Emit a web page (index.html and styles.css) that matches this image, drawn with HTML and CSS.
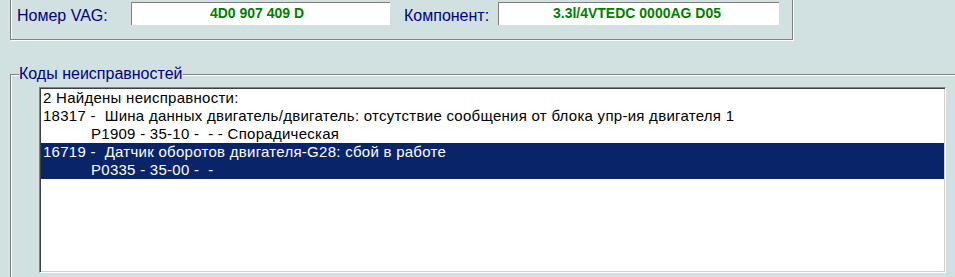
FILE: index.html
```html
<!DOCTYPE html>
<html lang="ru">
<head>
    <meta charset="UTF-8">
    <meta name="viewport" content="width=device-width, initial-scale=1.0">
    <title>Коды неисправностей</title>
    <link rel="stylesheet" href="styles.css">
</head>
<body>
    <div class="ident-panel">
        <div class="ident-row">
            <div class="field-label label-vag">Номер VAG:</div>
            <div class="field-value value-vag">4D0 907 409 D</div>
            <div class="field-label label-comp">Компонент:</div>
            <div class="field-value value-comp">3.3l/4VTEDC 0000AG D05</div>
        </div>
    </div>

    <fieldset class="fault-group">
        <legend class="fault-legend">Коды неисправностей</legend>
        <div class="fault-list">
            <div class="fault-line">2 Найдены неисправности:</div>
            <div class="fault-item">
                <div class="fault-line">18317 -  Шина данных двигатель/двигатель: отсутствие сообщения от блока упр-ия двигателя 1</div>
                <div class="fault-line sub">P1909 - 35-10 -  - - Спорадическая</div>
            </div>
            <div class="fault-item selected">
                <div class="fault-line">16719 -  Датчик оборотов двигателя-G28: сбой в работе</div>
                <div class="fault-line sub">P0335 - 35-00 -  -</div>
            </div>
        </div>
    </fieldset>
</body>
</html>
```

FILE: styles.css
```css
* {
    margin: 0;
    padding: 0;
    box-sizing: border-box;
}

body {
    font-family: "Liberation Sans", Arial, sans-serif;
    background-color: #d1e0e0;
    width: 955px;
    height: 277px;
    overflow: hidden;
}

/* top panel, its upper edge is scrolled out of view */
.ident-panel {
    width: 783px;
    height: 60px;
    margin: -20px 0 0 10px;
    padding: 21px 0 0 6px;
    border: 1px solid #808080;
    box-shadow: inset 1px 1px 0 #fff, 1px 1px 0 #fff;
}

.ident-row {
    display: flex;
    align-items: flex-start;
}

.field-label {
    font-size: 16px;
    line-height: 20px;
    color: #000080;
    margin-top: 4px;
}

.label-vag {
    width: 114px;
}

.label-comp {
    width: 94px;
    margin-left: 14px;
}

.field-value {
    height: 23px;
    background-color: #fff;
    border-top: 1px solid #808080;
    border-left: 1px solid #808080;
    color: #008000;
    font-weight: bold;
    font-size: 14px;
    line-height: 21px;
    text-align: center;
}

.value-vag {
    width: 259px;
    padding-right: 8px;
}

.value-comp {
    width: 281px;
    padding-right: 4px;
}

.fault-group {
    width: 980px;
    height: 213px;
    margin: 25px 0 0 10px;
    padding: 4px 0 0 28px;
    border: 1px solid #808080;
    box-shadow: inset 1px 1px 0 #fff;
}

.fault-legend {
    margin-left: -20px;
    padding: 0;
    font-size: 16px;
    line-height: 18px;
    color: #000080;
    background-color: #d1e0e0;
}

.fault-list {
    width: 907px;
    height: 186px;
    padding: 1px;
    background-color: #fff;
    border: 1px solid;
    border-color: #808080 #fff #fff #808080;
    box-shadow: inset 1px 1px 0 #404040, inset -1px -1px 0 #d4d0c8;
}

.fault-line {
    font-size: 15px;
    line-height: 18px;
    letter-spacing: 0.27px;
    padding-left: 2px;
    color: #000;
    white-space: pre;
}

.fault-line.sub {
    padding-left: 50px;
}

.fault-item.selected {
    background-color: #0a246a;
}

.fault-item.selected .fault-line {
    color: #fff;
}
```
